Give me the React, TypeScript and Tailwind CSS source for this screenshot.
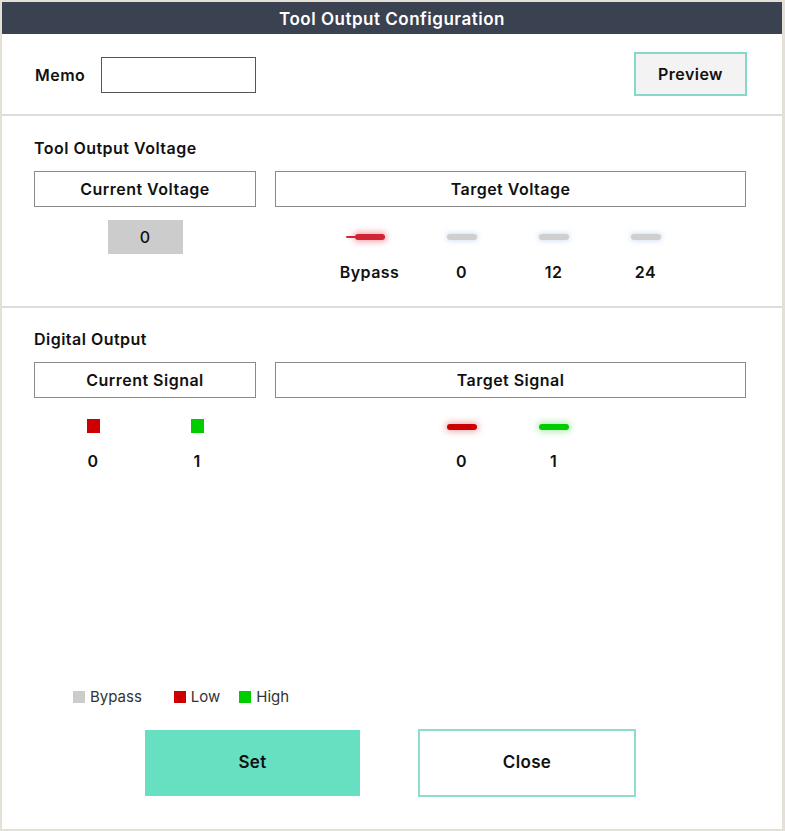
const font = { fontFamily: 'Inter, "Noto Sans", sans-serif' };

function Pill({ color, glow, tail }: { color: string; glow: string; tail?: boolean }) {
  return (
    <div className="relative flex h-4 items-center justify-center">
      {tail && <div className={`absolute left-[-9px] h-[2px] w-4 rounded-full ${color}`} />}
      <div className={`h-[6px] w-[30px] rounded-full ${color} ${glow}`} />
    </div>
  );
}

function HeaderBox({ label, className }: { label: string; className: string }) {
  return (
    <div
      className={`flex h-9 items-center justify-center border border-[#8a8a8a] text-[16px] font-semibold tracking-[0.03em] text-[#111] ${className}`}
    >
      {label}
    </div>
  );
}

const voltages = [
  { label: 'Bypass', active: true },
  { label: '0', active: false },
  { label: '12', active: false },
  { label: '24', active: false },
];

const labelCls = 'text-[16px] font-semibold tracking-[0.03em] text-[#111]';

export default function App() {
  return (
    <div style={font} className="h-[831px] w-[785px] bg-white">
      <div className="flex h-full flex-col border-t-2 border-r-[3px] border-b-2 border-l-2 border-[#e4e0d8]">
        <div className="flex h-8 items-center justify-center bg-[#3a4151] pt-[3px] text-[17px] font-semibold tracking-[0.03em] text-white">
          Tool Output Configuration
        </div>

        {/* memo row */}
        <div className="flex h-[82px] items-center border-b-2 border-[#dddddd] pr-[35px] pl-[33px]">
          <span className={`mt-[2px] ${labelCls}`}>Memo</span>
          <input className="mt-[2px] ml-[16px] h-9 w-[155px] border border-[#555] bg-white outline-none" />
          <button
            className={`ml-auto h-11 w-[113px] border-2 border-[#86d9c8] bg-[#f3f3f3] ${labelCls}`}
          >
            Preview
          </button>
        </div>

        {/* voltage */}
        <div className="h-[192px] border-b-2 border-[#dddddd] px-[32px] pt-[20px]">
          <div className={labelCls}>Tool Output Voltage</div>
          <div className="mt-[11px] flex gap-[19px]">
            <div className="w-[222px]">
              <HeaderBox label="Current Voltage" className="w-full" />
              <div className="mt-[13px] flex justify-center">
                <div className="flex h-[34px] w-[75px] items-center justify-center bg-[#cccccc] text-[16px] font-medium text-[#111]">
                  0
                </div>
              </div>
            </div>
            <div className="w-[471px]">
              <HeaderBox label="Target Voltage" className="w-full" />
              <div className="mt-[22px] mr-[6px] flex justify-center">
                {voltages.map((v) => (
                  <div key={v.label} className="flex w-[92px] flex-col items-center">
                    {v.active ? (
                      <Pill color="bg-[#d12434]" glow="shadow-[0_0_6px_2px_rgba(230,60,80,0.45)]" tail />
                    ) : (
                      <Pill color="bg-[#cfcfcf]" glow="shadow-[0_0_5px_1px_rgba(170,200,240,0.5)]" />
                    )}
                    <div className={`mt-[15px] ${labelCls}`}>{v.label}</div>
                  </div>
                ))}
              </div>
            </div>
          </div>
        </div>

        {/* digital output */}
        <div className="px-[32px] pt-[19px]">
          <div className={labelCls}>Digital Output</div>
          <div className="mt-[11px] flex gap-[19px]">
            <div className="w-[222px]">
              <HeaderBox label="Current Signal" className="w-full" />
              <div className="mt-[21px] flex justify-center">
                {[
                  { c: 'bg-[#cc0000]', l: '0' },
                  { c: 'bg-[#00cc00]', l: '1' },
                ].map((s) => (
                  <div key={s.l} className="flex w-[104px] flex-col items-center">
                    <div className={`h-[14px] w-[13px] ${s.c}`} />
                    <div className={`mt-[16px] ${labelCls}`}>{s.l}</div>
                  </div>
                ))}
              </div>
            </div>
            <div className="w-[471px]">
              <HeaderBox label="Target Signal" className="w-full" />
              <div className="mt-[21px] mr-[6px] flex justify-center">
                <div className="flex w-[92px] flex-col items-center">
                  <Pill color="bg-[#cc0000]" glow="shadow-[0_0_6px_2px_rgba(200,40,40,0.35)]" />
                  <div className={`mt-[14px] ${labelCls}`}>0</div>
                </div>
                <div className="flex w-[92px] flex-col items-center">
                  <Pill color="bg-[#00cc00]" glow="shadow-[0_0_6px_2px_rgba(40,200,40,0.35)]" />
                  <div className={`mt-[14px] ${labelCls}`}>1</div>
                </div>
              </div>
            </div>
          </div>
        </div>

        <div className="flex-1" />

        {/* legend */}
        <div className="flex items-center pl-[71px] text-[15px] text-[#333]">
          <div className="h-3 w-3 bg-[#cccccc]" />
          <span className="ml-[5px]">Bypass</span>
          <div className="ml-[32px] h-3 w-3 bg-[#cc0000]" />
          <span className="ml-[5px]">Low</span>
          <div className="ml-[19px] h-3 w-3 bg-[#00cc00]" />
          <span className="ml-[5px]">High</span>
        </div>

        <div className="mt-[21px] mb-[32px] flex items-center pl-[143px]">
          <button className="h-[66px] w-[215px] bg-[#66e0c0] text-[17px] font-semibold tracking-[0.02em] text-[#111]">
            Set
          </button>
          <button className="ml-[58px] h-[68px] w-[218px] border-2 border-[#8fdccd] bg-white text-[17px] font-semibold tracking-[0.02em] text-[#111]">
            Close
          </button>
        </div>
      </div>
    </div>
  );
}
